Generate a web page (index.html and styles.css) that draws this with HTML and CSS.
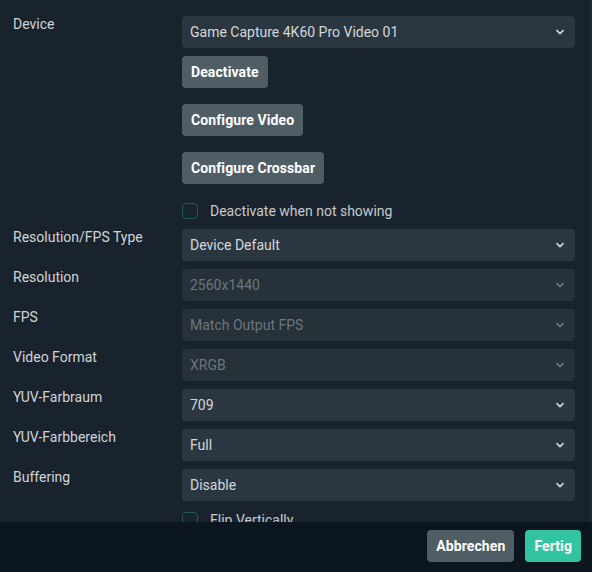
FILE: index.html
```html
<!DOCTYPE html>
<html>
<head>
<meta charset="utf-8">
<link rel="stylesheet" href="styles.css">
</head>
<body>
<div class="window">
  <div class="content">
    <div class="form">
      <div class="label">Device</div>
      <div class="stack">
        <div class="select"><span>Game Capture 4K60 Pro Video 01</span><svg class="chev" viewBox="0 0 10 6"><path d="M1.5 1.2 5 4.6 8.5 1.2"/></svg></div>
        <div><button class="btn">Deactivate</button></div>
        <div class="spaced"><button class="btn">Configure Video</button></div>
        <div class="spaced"><button class="btn">Configure Crossbar</button></div>
        <label class="check first"><span class="box"></span><span>Deactivate when not showing</span></label>
      </div>

      <div class="label">Resolution/FPS Type</div>
      <div class="select"><span>Device Default</span><svg class="chev" viewBox="0 0 10 6"><path d="M1.5 1.2 5 4.6 8.5 1.2"/></svg></div>

      <div class="label">Resolution</div>
      <div class="select disabled"><span>2560x1440</span><svg class="chev" viewBox="0 0 10 6"><path d="M1.5 1.2 5 4.6 8.5 1.2"/></svg></div>

      <div class="label">FPS</div>
      <div class="select disabled"><span>Match Output FPS</span><svg class="chev" viewBox="0 0 10 6"><path d="M1.5 1.2 5 4.6 8.5 1.2"/></svg></div>

      <div class="label">Video Format</div>
      <div class="select disabled"><span>XRGB</span><svg class="chev" viewBox="0 0 10 6"><path d="M1.5 1.2 5 4.6 8.5 1.2"/></svg></div>

      <div class="label">YUV-Farbraum</div>
      <div class="select"><span>709</span><svg class="chev" viewBox="0 0 10 6"><path d="M1.5 1.2 5 4.6 8.5 1.2"/></svg></div>

      <div class="label">YUV-Farbbereich</div>
      <div class="select"><span>Full</span><svg class="chev" viewBox="0 0 10 6"><path d="M1.5 1.2 5 4.6 8.5 1.2"/></svg></div>

      <div class="label">Buffering</div>
      <div class="select"><span>Disable</span><svg class="chev" viewBox="0 0 10 6"><path d="M1.5 1.2 5 4.6 8.5 1.2"/></svg></div>

      <div class="label"></div>
      <label class="check second"><span class="box"></span><span>Flip Vertically</span></label>
    </div>
  </div>
  <div class="footer">
    <button class="btn">Abbrechen</button>
    <button class="btn primary">Fertig</button>
  </div>
</div>
</body>
</html>
```

FILE: styles.css
```css
* { box-sizing: border-box; }
html, body {
  margin: 0;
  padding: 0;
  width: 592px;
  height: 572px;
  overflow: hidden;
  background: #19232d;
  font-family: Roboto, "Liberation Sans", sans-serif;
  font-size: 14px;
}
.window {
  display: flex;
  flex-direction: column;
  height: 572px;
}
.content {
  height: 522px;
  overflow: hidden;
  padding: 16px 15px 0 13px;
  border-right: 2px solid #1e2a34;
}
.form {
  display: grid;
  grid-template-columns: 169px 393px;
  row-gap: 8px;
}
.label {
  color: #d0d4d7;
  line-height: 16px;
}
.stack {
  display: flex;
  flex-direction: column;
  gap: 8px;
}
.stack .spaced { margin-top: 8px; }
.select {
  height: 32px;
  background: #2b3740;
  border-radius: 4px;
  display: flex;
  align-items: center;
  justify-content: space-between;
  padding: 0 10px 0 8px;
  color: #d3d7da;
}
.select.disabled { color: #6b767e; background: #26313a; }
.chev {
  width: 10px;
  height: 6px;
  fill: none;
  stroke: #d3d7da;
  stroke-width: 1.7;
}
.select.disabled .chev { stroke: #6b767e; }
.btn {
  height: 32px;
  padding: 0 9px;
  border: none;
  border-radius: 4px;
  background: #4f5d65;
  color: #ffffff;
  font-family: Roboto, "Liberation Sans", sans-serif;
  font-size: 14px;
  font-weight: bold;
  letter-spacing: 0.1px;
}
.check {
  display: flex;
  align-items: center;
  gap: 12px;
  color: #c6cbce;
  line-height: 16px;
}
.check.first { margin-top: 11px; margin-bottom: 2px; }
.check.second { margin-top: 3px; }
.box {
  width: 16px;
  height: 16px;
  border: 1px solid #1d5a4e;
  border-radius: 4px;
  flex: none;
}
.footer {
  height: 50px;
  background: #0b161e;
  display: flex;
  justify-content: flex-end;
  align-items: flex-start;
  gap: 11px;
  padding: 8px 11px 0 0;
}
.btn.primary { background: #32c3a0; }
```
